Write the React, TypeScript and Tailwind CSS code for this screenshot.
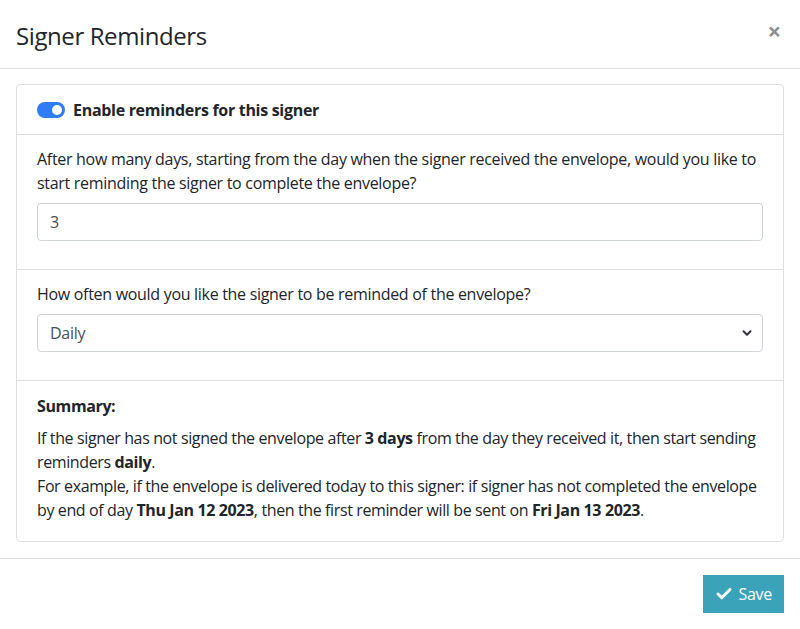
import { Check, ChevronDown } from 'lucide-react'

export default function App() {
  return (
    <div className="w-[800px] h-[629px] bg-white text-[#212529] text-[16px] leading-6 font-['Open_Sans',sans-serif] tracking-[-0.3px] flex flex-col">
      {/* header */}
      <div className="flex items-center justify-between h-[69px] px-4 pt-[3px] border-b border-[#e0e0e0]">
        <h5 className="text-[24px] leading-[32px] font-normal tracking-[-0.4px]">Signer Reminders</h5>
        <button className="text-[24px] leading-none text-[#8f8f8f] font-bold mr-[3px] -mt-[9px]">×</button>
      </div>

      {/* body */}
      <div className="px-4 pt-[15px] pb-4">
        <div className="border border-[#dfdfdf] rounded-[4px] flex flex-col">
          <div className="px-5 pt-[13px] pb-3 flex items-center gap-2">
            <span className="relative w-[28px] h-[16px] rounded-full bg-[#2e7cf6] inline-block">
              <span className="absolute right-[3px] top-[3px] w-[10px] h-[10px] rounded-full bg-white" />
            </span>
            <span className="font-bold">Enable reminders for this signer</span>
          </div>

          <div className="px-5 pt-3 pb-[28px] border-t border-[#dfdfdf]">
            <p className="mb-2">
              <span className="block whitespace-nowrap">After how many days, starting from the day when the signer received the envelope, would you like to</span>
              <span className="block whitespace-nowrap">start reminding the signer to complete the envelope?</span>
            </p>
            <div className="h-[38px] border border-[#ced4da] rounded-[4px] px-3 flex items-center text-[#495057]">3</div>
          </div>

          <div className="px-5 pt-3 pb-[28px] border-t border-[#dfdfdf]">
            <p className="mb-2">How often would you like the signer to be reminded of the envelope?</p>
            <div className="h-[38px] border border-[#ced4da] rounded-[4px] pl-3 pr-2 flex items-center justify-between text-[#495057]">
              <span>Daily</span>
              <ChevronDown size={14} strokeWidth={3.5} className="text-[#343a40]" />
            </div>
          </div>

          <div className="px-5 pt-[13px] pb-[19px] border-t border-[#dfdfdf] tracking-[-0.38px]">
            <p className="font-bold mb-2">Summary:</p>
            <p>
              <span className="block whitespace-nowrap">
                If the signer has not signed the envelope after <b>3 days</b> from the day they received it, then start sending
              </span>
              <span className="block whitespace-nowrap">
                reminders <b>daily</b>.
              </span>
              <span className="block whitespace-nowrap">
                For example, if the envelope is delivered today to this signer: if signer has not completed the envelope
              </span>
              <span className="block whitespace-nowrap">
                by end of day <b>Thu Jan 12 2023</b>, then the first reminder will be sent on <b>Fri Jan 13 2023</b>.
              </span>
            </p>
          </div>
        </div>
      </div>

      {/* footer */}
      <div className="border-t border-[#e0e0e0] px-4 pt-4 flex justify-end">
        <button className="h-[38px] px-3 bg-[#3ba3b9] text-white flex items-center gap-[6px] text-[16px]">
          <Check size={18} strokeWidth={4} />
          Save
        </button>
      </div>
    </div>
  )
}
